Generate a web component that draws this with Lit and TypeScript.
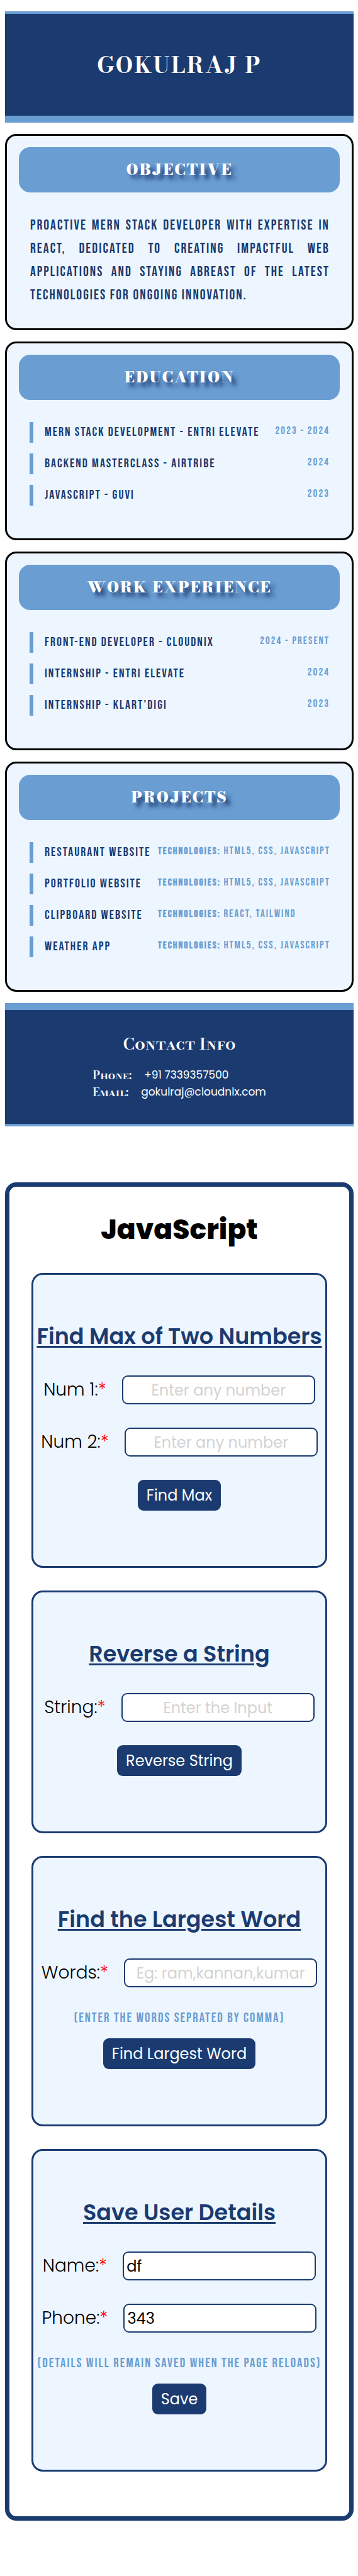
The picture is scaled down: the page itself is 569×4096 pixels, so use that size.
import { LitElement, html, css, nothing } from "lit";
import { customElement } from "lit/decorators.js";

interface Entry {
  name: string;
  date: string;
}

interface Project {
  name: string;
  tech: string;
}

interface Field {
  id: string;
  label: string;
  placeholder?: string;
  value?: string;
}

interface Exercise {
  title: string;
  fields: Field[];
  hint?: string;
  action: string;
}

const EDUCATION: Entry[] = [
  { name: "MERN Stack Development - Entri Elevate", date: "2023 - 2024" },
  { name: "Backend Masterclass - Airtribe", date: "2024" },
  { name: "JavaScript - GUVI", date: "2023" },
];

const WORK: Entry[] = [
  { name: "Front-End Developer - Cloudnix", date: "2024 - Present" },
  { name: "Internship - Entri Elevate", date: "2024" },
  { name: "Internship - Klart'Digi", date: "2023" },
];

const PROJECTS: Project[] = [
  { name: "Restaurant Website", tech: "HTML5, CSS, JavaScript" },
  { name: "Portfolio Website", tech: "HTML5, CSS, JavaScript" },
  { name: "Clipboard Website", tech: "React, Tailwind" },
  { name: "Weather App", tech: "HTML5, CSS, JavaScript" },
];

const EXERCISES: Exercise[] = [
  {
    title: "Find Max of Two Numbers",
    fields: [
      { id: "num1", label: "Num 1:", placeholder: "Enter any number" },
      { id: "num2", label: "Num 2:", placeholder: "Enter any number" },
    ],
    action: "Find Max",
  },
  {
    title: "Reverse a String",
    fields: [{ id: "string", label: "String:", placeholder: "Enter the Input" }],
    action: "Reverse String",
  },
  {
    title: "Find the Largest Word",
    fields: [{ id: "words", label: "Words:", placeholder: "Eg: ram,kannan,kumar" }],
    hint: "(Enter the words seprated by comma)",
    action: "Find Largest Word",
  },
  {
    title: "Save User Details",
    fields: [
      { id: "name", label: "Name:", value: "df" },
      { id: "phone", label: "Phone:", value: "343" },
    ],
    hint: "(Details will remain saved when the page reloads)",
    action: "Save",
  },
];

@customElement("app-root")
export class AppRoot extends LitElement {
  static styles = css`
    :host {
      --navy: #1b3b70;
      --blue: #6a9dd2;
      --pale: #edf6ff;
      --display: "Bodoni Moda", "Liberation Serif", serif;
      --narrow: "Bebas Neue", "Liberation Sans Narrow", "Liberation Sans", sans-serif;
      --body: Poppins, Inter, sans-serif;
      display: block;
      padding: 18px 7px 88px 8px;
      background: #fff;
      font-family: var(--body);
    }
    *, *::before {
      box-sizing: border-box;
    }
    h1, h2, h3, p, ul, dl, dd {
      margin: 0;
      padding: 0;
    }
    .resume {
      display: flex;
      flex-direction: column;
      gap: 18px;
    }
    .masthead {
      display: flex;
      align-items: center;
      justify-content: center;
      min-height: 177px;
      border-top: 4px solid var(--blue);
      border-bottom: 11px solid var(--blue);
      background: var(--navy);
    }
    .masthead h1 {
      color: #fff;
      font: 700 36px/44px var(--display);
      letter-spacing: 2px;
      text-transform: uppercase;
    }
    .card {
      border: 3px solid #000;
      border-radius: 18px;
      background: var(--pale);
      padding: 18px 19px 52px;
    }
    .card h2 {
      border-radius: 18px;
      background: var(--blue);
      color: #fff;
      font: 900 24px/72px var(--display);
      letter-spacing: 2px;
      text-align: center;
      text-transform: uppercase;
      text-shadow: 7px 7px 6px var(--navy);
    }
    .card.objective {
      padding-bottom: 34px;
    }
    .objective p {
      padding: 34px 16px 0 18px;
      color: var(--navy);
      font: 400 22px/37px var(--narrow);
      letter-spacing: 2px;
      text-align: justify;
      text-transform: uppercase;
    }
    .list {
      display: flex;
      flex-direction: column;
      gap: 17px;
      padding: 35px 16px 0 17px;
      list-style: none;
      font-family: var(--narrow);
      text-transform: uppercase;
      letter-spacing: 2px;
    }
    .list li {
      display: flex;
      justify-content: space-between;
      border-left: 6px solid var(--blue);
      padding-left: 18px;
      line-height: 33px;
    }
    .title {
      color: var(--navy);
      font-size: 20px;
      white-space: nowrap;
    }
    .date, .tech {
      color: var(--blue);
      font-size: 17px;
      line-height: 28px;
      white-space: nowrap;
    }
    .tech b {
      font-size: 16px;
    }
    .projects .list li {
      display: grid;
      grid-template-columns: 1fr 273px;
    }
    .contact {
      border-top: 11px solid var(--blue);
      border-bottom: 4px solid var(--blue);
      background: var(--navy);
      color: #fff;
      padding: 34px 0 37px;
    }
    .contact h2 {
      font: 600 26px/40px var(--display);
      font-variant: small-caps;
      text-align: center;
    }
    .contact dl {
      width: fit-content;
      margin: 0 auto;
      padding-top: 16px;
    }
    .contact .line {
      display: flex;
      gap: 20px;
      line-height: 27px;
    }
    .contact dt {
      font: 600 18px/27px var(--display);
      font-variant: small-caps;
    }
    .contact a {
      color: inherit;
      font-size: 17px;
      text-decoration: none;
    }
    .practice {
      display: flex;
      flex-direction: column;
      gap: 36px;
      margin-top: 89px;
      border: 7px solid var(--navy);
      border-radius: 18px;
      padding: 38px 35px 71px;
    }
    .practice h2 {
      padding-bottom: 3px;
      color: #000;
      font-size: 44px;
      font-weight: 800;
      line-height: 60px;
      text-align: center;
    }
    .exercise {
      display: flex;
      flex-direction: column;
      align-items: center;
      border: 3px solid var(--navy);
      border-radius: 18px;
      background: var(--pale);
      padding: 74px 0 88px;
    }
    .exercise h3 {
      color: var(--navy);
      font-size: 35px;
      font-weight: 600;
      line-height: 48px;
      white-space: nowrap;
      text-decoration: underline;
      text-decoration-thickness: 3px;
      text-underline-offset: 3px;
    }
    .fields {
      display: flex;
      flex-direction: column;
      align-items: center;
      gap: 37px;
      padding: 38px 0 37px;
    }
    .field {
      display: flex;
      align-items: center;
      gap: 25px;
    }
    .field label {
      color: #000;
      font-size: 28px;
      font-weight: 300;
      line-height: 36px;
      white-space: nowrap;
    }
    .required {
      color: #f00;
    }
    .field input {
      width: 307px;
      height: 46px;
      border: 2px solid var(--navy);
      border-radius: 9px;
      background: #fff;
      color: #000;
      padding: 0 4px;
      font: 400 24px/36px var(--body);
    }
    .field input::placeholder {
      color: #d3d3d3;
      opacity: 1;
      text-align: center;
    }
    .hint {
      padding-bottom: 20px;
      color: var(--blue);
      font: 400 21px/24px var(--narrow);
      letter-spacing: 2px;
      text-transform: uppercase;
      white-space: nowrap;
    }
    .exercise button {
      height: 49px;
      border: 0;
      border-radius: 9px;
      background: var(--navy);
      color: #fff;
      padding: 0 14px;
      font: 400 24px/36px var(--body);
      cursor: pointer;
    }
  `;

  private entryCard(title: string, entries: Entry[]) {
    return html`
      <section class="card">
        <h2>${title}</h2>
        <ul class="list">
          ${entries.map(
            (e) => html`<li><span class="title">${e.name}</span><span class="date">${e.date}</span></li>`,
          )}
        </ul>
      </section>
    `;
  }

  private exerciseCard(ex: Exercise) {
    return html`
      <form class="exercise" @submit=${(e: Event) => e.preventDefault()}>
        <h3>${ex.title}</h3>
        <div class="fields">
          ${ex.fields.map(
            (f) => html`
              <div class="field">
                <label for=${f.id}>${f.label}<span class="required">*</span></label>
                <input id=${f.id} type="text" placeholder=${f.placeholder ?? nothing} .value=${f.value ?? ""} />
              </div>
            `,
          )}
        </div>
        ${ex.hint ? html`<p class="hint">${ex.hint}</p>` : nothing}
        <button type="submit">${ex.action}</button>
      </form>
    `;
  }

  render() {
    return html`
      <div class="resume">
        <header class="masthead"><h1>Gokulraj P</h1></header>
        <section class="card objective">
          <h2>Objective</h2>
          <p>
            Proactive MERN Stack Developer with expertise in React, dedicated to creating impactful web
            applications and staying abreast of the latest technologies for ongoing innovation.
          </p>
        </section>
        ${this.entryCard("Education", EDUCATION)} ${this.entryCard("Work Experience", WORK)}
        <section class="card projects">
          <h2>Projects</h2>
          <ul class="list">
            ${PROJECTS.map(
              (p) => html`<li>
                <span class="title">${p.name}</span>
                <span class="tech"><b>Technologies:</b> ${p.tech}</span>
              </li>`,
            )}
          </ul>
        </section>
        <footer class="contact">
          <h2>Contact Info</h2>
          <dl>
            <div class="line">
              <dt>Phone:</dt>
              <dd><a href="tel:+917339357500">+91 7339357500</a></dd>
            </div>
            <div class="line">
              <dt>Email:</dt>
              <dd><a href="mailto:gokulraj@cloudnix.com">gokulraj@cloudnix.com</a></dd>
            </div>
          </dl>
        </footer>
      </div>
      <main class="practice">
        <h2>JavaScript</h2>
        ${EXERCISES.map((ex) => this.exerciseCard(ex))}
      </main>
    `;
  }
}
